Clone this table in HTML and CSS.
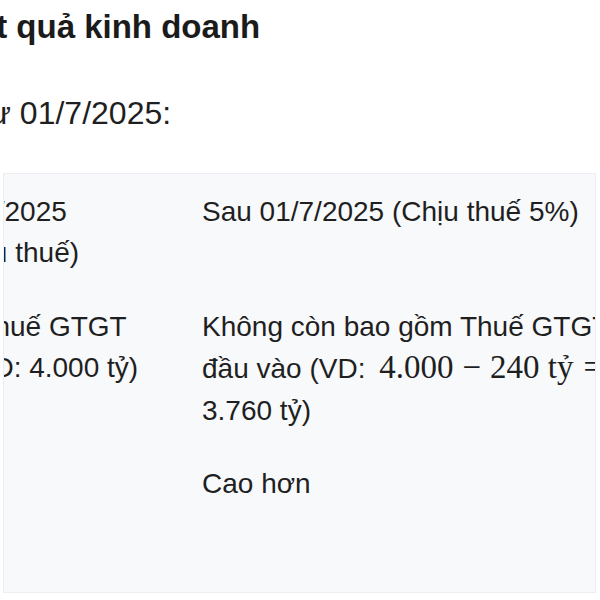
FILE: index.html
```html
<!DOCTYPE html>
<html lang="vi">
<head>
<meta charset="utf-8">
<title>Kết quả kinh doanh</title>
<link rel="stylesheet" href="styles.css">
</head>
<body>
<main class="page">
  <h2 class="title">Kết quả kinh doanh</h2>
  <p class="lead">Từ 01/7/2025:</p>
  <div class="table-box">
    <div class="grid">
      <div class="cell">Trước 01/7/2025 (Không chịu thuế)</div>
      <div class="cell">Sau 01/7/2025 (Chịu thuế 5%)</div>
      <div class="cell">Bao gồm Thuế GTGT đầu vào (VD: 4.000 tỷ)</div>
      <div class="cell">Không còn bao gồm Thuế GTGT đầu vào (VD: <span class="math">4.000<span class="op">−</span>240 tỷ<span class="rel">=</span></span> 3.760 tỷ)</div>
      <div class="cell">Thấp hơn</div>
      <div class="cell">Cao hơn</div>
    </div>
  </div>
</main>
</body>
</html>
```

FILE: styles.css
```css
html, body {
  margin: 0;
  padding: 0;
  background: #ffffff;
}

body {
  width: 600px;
  height: 600px;
  overflow: hidden;
  font-family: "Liberation Sans", Arial, sans-serif;
  color: #1f1f1f;
}

.page {
  padding-top: 7px;
}

.title {
  margin: 0 0 0 -46px;
  font-size: 33px;
  line-height: 40px;
  font-weight: 700;
  color: #1b1b1b;
  white-space: nowrap;
}

.lead {
  margin: 42px 0 0 -30px;
  font-size: 32px;
  line-height: 48px;
  white-space: nowrap;
}

.table-box {
  box-sizing: border-box;
  margin: 36px 0 0 3px;
  width: 593px;
  height: 420px;
  padding-top: 1px;
  background: #f8f9fb;
  border: 1px solid #eceef1;
  overflow: hidden;
}

.grid {
  display: grid;
  grid-template-columns: 344px 489px;
  margin-left: -173px;
  font-size: 28px;
  line-height: 41.4px;
}

.cell {
  box-sizing: border-box;
  padding: 16px 27px;
}

.math {
  margin-left: 6px;
  font-family: "Liberation Serif", "Times New Roman", serif;
  font-size: 33px;
  white-space: nowrap;
}

.op {
  margin: 0 9px;
}

.rel {
  margin-left: 10px;
}
```
